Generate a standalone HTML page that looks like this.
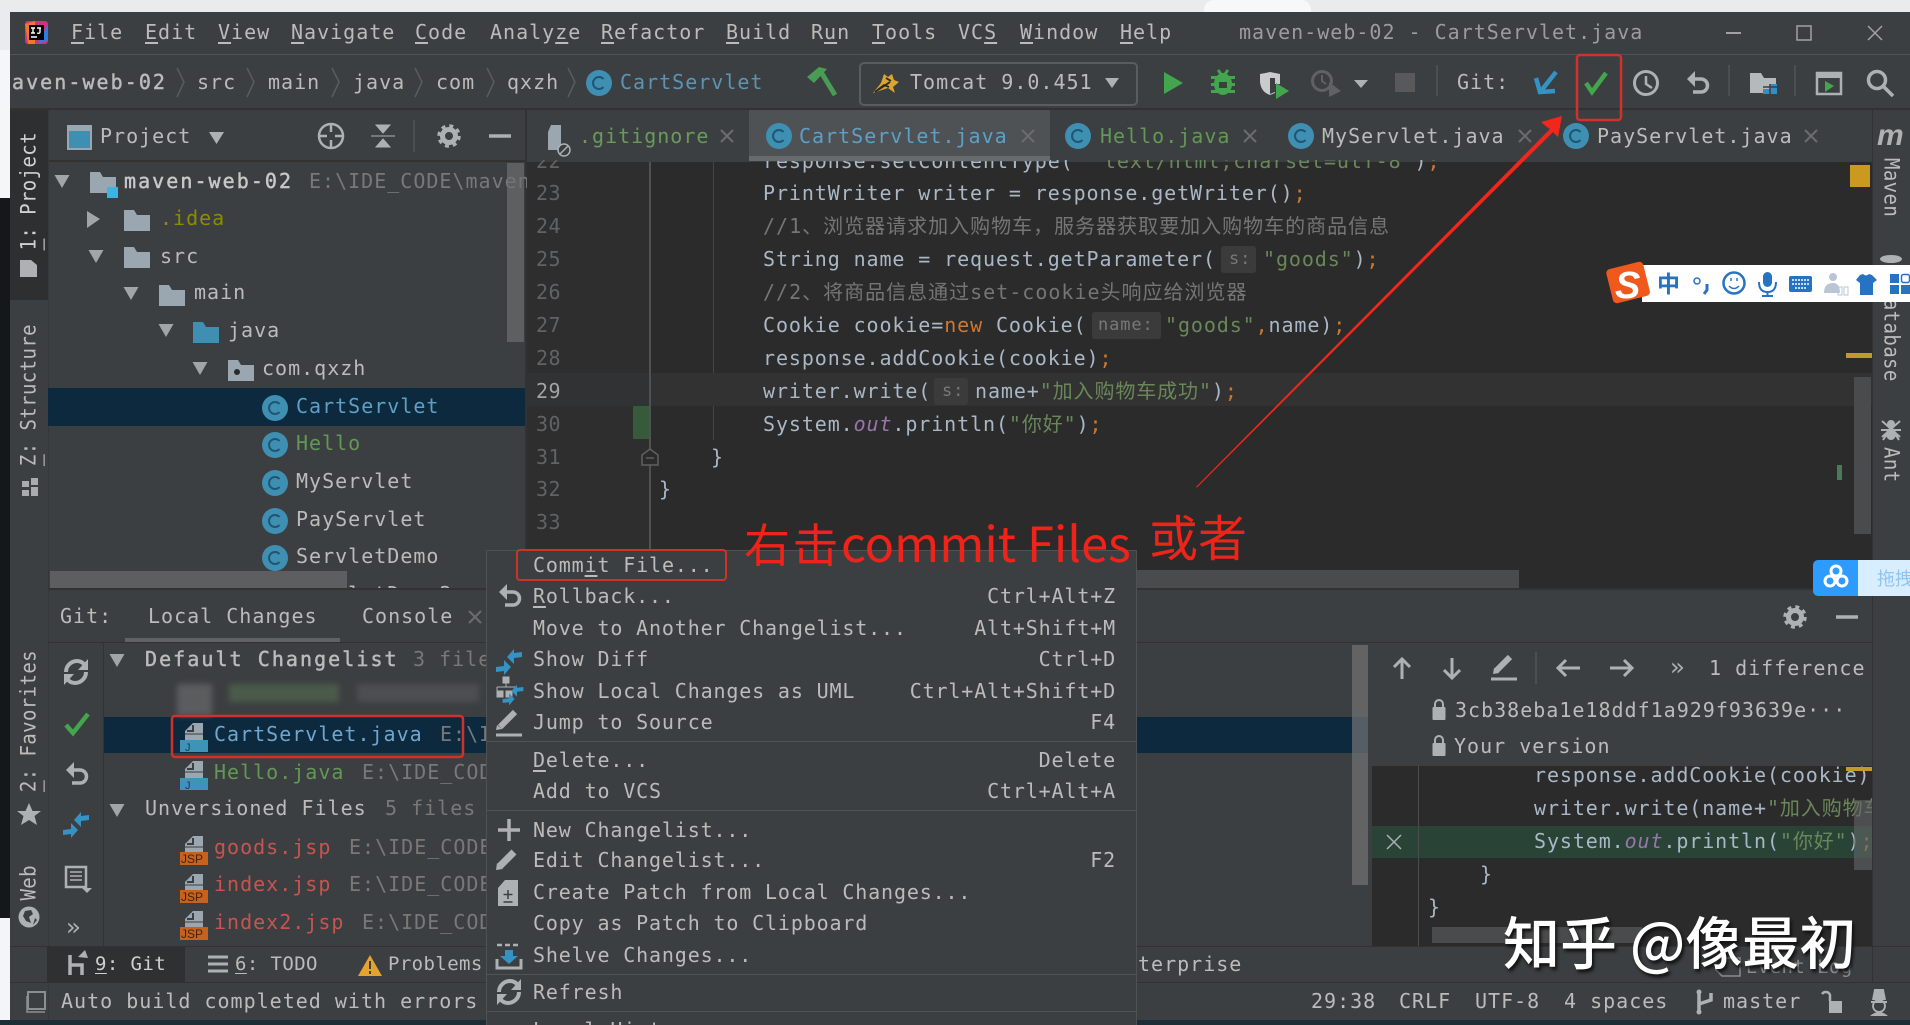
<!DOCTYPE html>
<html><head><meta charset="utf-8"><title>maven-web-02</title>
<style>
html{margin:0;padding:0;width:1910px;height:1025px;overflow:hidden;background:#3c3f41}
body{margin:0;padding:0;width:1910px;height:1025px;overflow:hidden;position:relative;background:#3c3f41}
.b{position:absolute}
.w{position:absolute;left:0;top:1px;width:1910px;height:1024px}
.t{position:absolute;white-space:pre;font:20px/30px "DejaVu Sans Mono","Noto Sans CJK SC",monospace;letter-spacing:1px;color:#bbbbbb}
.st{-webkit-text-stroke:.45px currentColor;letter-spacing:2.05px}
.sm{font-size:19px;letter-spacing:.4px}
.c{position:absolute;white-space:pre;font:20px/30px "DejaVu Sans Mono","Noto Sans CJK SC",monospace;letter-spacing:.9px;color:#a9b7c6}
.n{color:#606366;letter-spacing:.5px}
.g{color:#787878}
.u{text-decoration:underline;text-underline-offset:3px}
.v{position:absolute;white-space:pre;font:19px/24px "DejaVu Sans Mono",monospace;letter-spacing:.4px;color:#bbbbbb;writing-mode:vertical-rl;transform:scaleX(1.12)}
.up{transform:rotate(180deg) scaleX(1.12)}
i{font-style:normal}
.o{color:#cc7832}.s{color:#6a8759}.cm{color:#808080}
.m{position:absolute;left:533px;white-space:pre;font:20px/30px "DejaVu Sans Mono","Noto Sans CJK SC",monospace;letter-spacing:.85px;color:#bbbbbb}
.k{position:absolute;right:794px;white-space:pre;font:20px/30px "DejaVu Sans Mono",monospace;letter-spacing:.85px;color:#bbbbbb}
svg{position:absolute;left:0;top:0}
</style></head><body>
<!-- outside chrome -->
<div class="b" style="left:0;top:0;width:1910px;height:12px;background:#e9ebed"></div>
<div class="b" style="left:1204px;top:0;width:107px;height:12px;background:#f7f8f9;border-radius:10px 10px 0 0"></div>
<div class="b" style="left:0;top:0;width:10px;height:50px;background:#e9ebed"></div>
<div class="b" style="left:0;top:50px;width:10px;height:148px;background:#f5f6f7"></div>
<div class="b" style="left:0;top:198px;width:10px;height:720px;background:#15181b"></div>
<div class="b" style="left:0;top:918px;width:10px;height:102px;background:#f4f5f6"></div>
<div class="b" style="left:0;top:1020px;width:1910px;height:5px;background:#1e2e36"></div>

<!-- window -->
<div class="b" style="left:10px;top:12px;width:1900px;height:1008px;background:#3c3f41"></div>
<div class="b" style="left:10px;top:54px;width:1900px;height:1px;background:#515456"></div>
<div class="b" style="left:10px;top:108px;width:1900px;height:2px;background:#323232"></div>

<!-- menu bar -->
<span class="t" style="left:71px;top:17px"><i class="u">F</i>ile</span>
<span class="t" style="left:145px;top:17px"><i class="u">E</i>dit</span>
<span class="t" style="left:218px;top:17px"><i class="u">V</i>iew</span>
<span class="t" style="left:291px;top:17px"><i class="u">N</i>avigate</span>
<span class="t" style="left:415px;top:17px"><i class="u">C</i>ode</span>
<span class="t" style="left:490px;top:17px">Analy<i class="u">z</i>e</span>
<span class="t" style="left:601px;top:17px"><i class="u">R</i>efactor</span>
<span class="t" style="left:726px;top:17px"><i class="u">B</i>uild</span>
<span class="t" style="left:811px;top:17px">R<i class="u">u</i>n</span>
<span class="t" style="left:872px;top:17px"><i class="u">T</i>ools</span>
<span class="t" style="left:958px;top:17px">VC<i class="u">S</i></span>
<span class="t" style="left:1020px;top:17px"><i class="u">W</i>indow</span>
<span class="t" style="left:1120px;top:17px"><i class="u">H</i>elp</span>
<span class="t" style="left:1239px;top:17px;color:#9a9c9e">maven-web-02 - CartServlet.java</span>

<!-- nav bar -->
<span class="t st" style="left:12px;top:67px">aven-web-02</span>
<span class="t" style="left:197px;top:67px">src</span>
<span class="t" style="left:268px;top:67px">main</span>
<span class="t" style="left:353px;top:67px">java</span>
<span class="t" style="left:436px;top:67px">com</span>
<span class="t" style="left:507px;top:67px">qxzh</span>
<span class="t" style="left:620px;top:67px;color:#5b94b5">CartServlet</span>
<div class="b" style="left:859px;top:62px;width:275px;height:40px;border:2px solid #5a5d5f;border-radius:5px"></div>
<span class="t" style="left:910px;top:67px">Tomcat 9.0.451</span>
<span class="t" style="left:1457px;top:67px">Git:</span>

<!-- left stripe -->
<div class="b" style="left:10px;top:110px;width:38px;height:190px;background:#2d2f31"></div>
<div class="b" style="left:48px;top:110px;width:1px;height:910px;background:#353739"></div>
<span class="v up" style="left:17px;top:132px;color:#d0d0d0"><i class="u">1</i>: Project</span>
<span class="v up" style="left:17px;top:324px"><i class="u">Z</i>: Structure</span>
<span class="v up" style="left:17px;top:650px"><i class="u">2</i>: Favorites</span>
<span class="v up" style="left:17px;top:865px">Web</span>

<!-- project panel -->
<span class="t" style="left:100px;top:121px">Project</span>
<div class="b" style="left:49px;top:160px;width:476px;height:2px;background:#323232"></div>
<div class="b" style="left:525px;top:110px;width:2px;height:480px;background:#323232"></div>
<div class="b" style="left:48px;top:388px;width:477px;height:38px;background:#0d293e"></div>
<span class="t st" style="left:124px;top:166px;color:#c8c8c8">maven-web-02</span>
<span class="t g" style="left:309px;top:166px">E:\IDE_CODE\maven</span>
<span class="t" style="left:160px;top:203px;color:#8c8c00">.idea</span>
<span class="t" style="left:160px;top:241px">src</span>
<span class="t" style="left:194px;top:277px">main</span>
<span class="t" style="left:228px;top:315px">java</span>
<span class="t" style="left:262px;top:353px">com.qxzh</span>
<span class="t" style="left:296px;top:391px;color:#5e9fc6">CartServlet</span>
<span class="t" style="left:296px;top:428px;color:#629755">Hello</span>
<span class="t" style="left:296px;top:466px">MyServlet</span>
<span class="t" style="left:296px;top:504px">PayServlet</span>
<span class="t" style="left:296px;top:541px">ServletDemo</span>
<span class="t" style="left:296px;top:579px">ServletDemo2</span>
<div class="b" style="left:507px;top:163px;width:17px;height:179px;background:rgba(110,112,114,.65)"></div>
<div class="b" style="left:50px;top:571px;width:297px;height:17px;background:#5c5e60"></div>

<!-- editor -->
<div class="b" style="left:527px;top:162px;width:1345px;height:428px;background:#2b2b2b;overflow:hidden"></div>
<div class="b" style="left:527px;top:162px;width:122px;height:428px;background:#2e2e2f"></div>
<div class="b" style="left:649px;top:162px;width:2px;height:428px;background:#515151"></div>
<div class="b" style="left:713px;top:162px;width:1px;height:278px;background:#454545"></div>
<div class="b" style="left:651px;top:373px;width:1221px;height:33px;background:#323232"></div>
<div class="b" style="left:527px;top:373px;width:122px;height:33px;background:#313233"></div>
<div class="b" style="left:633px;top:406px;width:16px;height:33px;background:#375a3a"></div>
<div class="w">
<span class="c" style="left:763px;top:145px">response.setContentType(</span>
<span class="c" style="left:1091px;top:145px"><i class="s">"text/html;charset=utf-8"</i>)<i class="o">;</i></span>
<span class="c n" style="left:536px;top:145px">22</span>
<span class="c n" style="left:536px;top:177px">23</span>
<span class="c n" style="left:536px;top:210px">24</span>
<span class="c n" style="left:536px;top:243px">25</span>
<span class="c n" style="left:536px;top:276px">26</span>
<span class="c n" style="left:536px;top:309px">27</span>
<span class="c n" style="left:536px;top:342px">28</span>
<span class="c n" style="left:536px;top:375px;color:#a4a3a3">29</span>
<span class="c n" style="left:536px;top:408px">30</span>
<span class="c n" style="left:536px;top:441px">31</span>
<span class="c n" style="left:536px;top:473px">32</span>
<span class="c n" style="left:536px;top:506px">33</span>
<span class="c" style="left:763px;top:177px">PrintWriter writer = response.getWriter()<i class="o">;</i></span>
<span class="c cm" style="left:763px;top:210px;letter-spacing:1px;color:#757575">//1、浏览器请求加入购物车，服务器获取要加入购物车的商品信息</span>
<span class="c" style="left:763px;top:243px">String name = request.getParameter(</span>
<div class="b" style="left:1221px;top:245px;width:35px;height:27px;background:#3b3b3b;border-radius:3px"></div>
<span class="c" style="left:1229px;top:243px;font-size:17px;color:#787878">s:</span>
<span class="c" style="left:1263px;top:243px"><i class="s">"goods"</i>)<i class="o">;</i></span>
<span class="c cm" style="left:763px;top:276px;letter-spacing:1px;color:#757575">//2、将商品信息通过set-cookie头响应给浏览器</span>
<span class="c" style="left:763px;top:309px">Cookie cookie=<i class="o">new</i> Cookie(</span>
<div class="b" style="left:1092px;top:311px;width:69px;height:27px;background:#3b3b3b;border-radius:3px"></div>
<span class="c" style="left:1098px;top:309px;font-size:17px;color:#787878">name:</span>
<span class="c" style="left:1165px;top:309px"><i class="s">"goods"</i><i class="o">,</i>name)<i class="o">;</i></span>
<span class="c" style="left:763px;top:342px">response.addCookie(cookie)<i class="o">;</i></span>
<span class="c" style="left:763px;top:375px">writer.write(</span>
<div class="b" style="left:934px;top:377px;width:34px;height:27px;background:#3b3b3b;border-radius:3px"></div>
<span class="c" style="left:942px;top:375px;font-size:17px;color:#787878">s:</span>
<span class="c" style="left:975px;top:375px">name+<i class="s">"加入购物车成功"</i>)<i class="o">;</i></span>
<span class="c" style="left:763px;top:408px">System.<i style="font-style:italic;color:#9876aa">out</i>.println(<i class="s">"你好"</i>)<i class="o">;</i></span>
<span class="c" style="left:711px;top:441px">}</span>
<span class="c" style="left:659px;top:473px">}</span>
</div>
<div class="b" style="left:1854px;top:377px;width:17px;height:157px;background:#4a4b4c"></div>
<div class="b" style="left:1850px;top:165px;width:20px;height:22px;background:#c99a1f"></div>
<div class="b" style="left:1846px;top:353px;width:26px;height:5px;background:#c19a2a"></div>
<div class="b" style="left:1837px;top:465px;width:5px;height:15px;background:#4b7a5a"></div>
<div class="b" style="left:650px;top:570px;width:869px;height:18px;background:#4a4b4c"></div>

<!-- tabs -->
<div class="b" style="left:527px;top:110px;width:1345px;height:50px;background:#3c3f41"></div>
<div class="b" style="left:749px;top:110px;width:301px;height:47px;background:#4e5254"></div>
<div class="b" style="left:749px;top:156px;width:301px;height:5px;background:#686b6e"></div>
<span class="t" style="left:579px;top:121px;color:#6a9a5b">.gitignore</span>
<span class="t" style="left:799px;top:121px;color:#5e9fc6">CartServlet.java</span>
<span class="t" style="left:1100px;top:121px;color:#629755">Hello.java</span>
<span class="t" style="left:1322px;top:121px">MyServlet.java</span>
<span class="t" style="left:1597px;top:121px">PayServlet.java</span>

<!-- right stripe -->
<div class="b" style="left:1872px;top:110px;width:38px;height:872px;background:#3c3f41;border-left:1px solid #323232;box-sizing:border-box"></div>
<span class="v" style="left:1879px;top:158px">Maven</span>
<span class="v" style="left:1879px;top:287px">Database</span>
<span class="v" style="left:1879px;top:447px">Ant</span>
<span class="t" style="left:1877px;top:121px;font:italic bold 30px/30px 'Liberation Sans',sans-serif;color:#b0b0b0;letter-spacing:0">m</span>

<!-- git panel -->
<div class="b" style="left:49px;top:588px;width:1823px;height:358px;background:#3c3f41"></div>
<div class="b" style="left:49px;top:588px;width:1823px;height:2px;background:#323232"></div>
<div class="b" style="left:49px;top:642px;width:1823px;height:1px;background:#323232"></div>
<span class="t" style="left:60px;top:601px">Git:</span>
<span class="t" style="left:148px;top:601px">Local Changes</span>
<span class="t" style="left:362px;top:601px">Console</span>
<div class="b" style="left:125px;top:638px;width:215px;height:4px;background:#606366"></div>
<div class="b" style="left:103px;top:643px;width:1px;height:303px;background:#323232"></div>
<div class="b" style="left:104px;top:717px;width:1264px;height:36px;background:#0d293e"></div>
<span class="t st" style="left:145px;top:644px">Default Changelist</span>
<span class="t g" style="left:413px;top:644px">3 files</span>
<div class="b" style="left:177px;top:684px;width:35px;height:32px;background:#5a5c5e;filter:blur(3px)"></div>
<div class="b" style="left:229px;top:684px;width:110px;height:18px;background:#4b5a4a;filter:blur(3px)"></div>
<div class="b" style="left:357px;top:684px;width:122px;height:18px;background:#4c4e50;filter:blur(3px)"></div>
<span class="t" style="left:214px;top:719px;color:#6fa6cf">CartServlet.java</span>
<span class="t g" style="left:440px;top:719px">E:\IDE_CODE</span>
<span class="t" style="left:214px;top:757px;color:#629755">Hello.java</span>
<span class="t g" style="left:362px;top:757px">E:\IDE_CODE</span>
<span class="t" style="left:145px;top:793px">Unversioned Files</span>
<span class="t g" style="left:385px;top:793px">5 files</span>
<span class="t" style="left:214px;top:832px;color:#c75450">goods.jsp</span>
<span class="t g" style="left:349px;top:832px">E:\IDE_CODE</span>
<span class="t" style="left:214px;top:869px;color:#c75450">index.jsp</span>
<span class="t g" style="left:349px;top:869px">E:\IDE_CODE</span>
<span class="t" style="left:214px;top:907px;color:#c75450">index2.jsp</span>
<span class="t g" style="left:362px;top:907px">E:\IDE_CODE</span>
<div class="b" style="left:1352px;top:645px;width:16px;height:240px;background:rgba(110,112,114,.75)"></div>

<!-- diff -->
<div class="b" style="left:1372px;top:766px;width:500px;height:180px;background:#2b2b2b"></div>
<div class="b" style="left:1372px;top:826px;width:500px;height:32px;background:#294436"></div>
<div class="b" style="left:1418px;top:766px;width:1px;height:180px;background:#4a4c4e"></div>
<span class="t" style="left:1709px;top:653px">1 difference</span>
<span class="t" style="left:1455px;top:695px">3cb38eba1e18ddf1a929f93639e···</span>
<span class="t" style="left:1454px;top:731px">Your version</span>
<div class="b" style="left:1372px;top:766px;width:500px;height:180px;overflow:hidden">
<span class="c" style="left:162px;top:-6px">response.addCookie(cookie)<i class="o">;</i></span>
<span class="c" style="left:162px;top:27px">writer.write(name+<i class="s">"加入购物车成功"</i>)<i class="o">;</i></span>
<span class="c" style="left:162px;top:60px">System.<i style="font-style:italic;color:#9876aa">out</i>.println(<i class="s">"你好"</i>)<i class="o">;</i></span>
<span class="c" style="left:108px;top:93px">}</span>
<span class="c" style="left:56px;top:126px">}</span>
</div>
<div class="b" style="left:1854px;top:800px;width:18px;height:70px;background:rgba(100,102,104,.6)"></div>
<div class="b" style="left:1846px;top:767px;width:26px;height:4px;background:#c19a2a"></div>
<div class="b" style="left:1432px;top:927px;width:210px;height:16px;background:#4a4b4c"></div>

<!-- bottom bars -->
<div class="b" style="left:10px;top:946px;width:1900px;height:1px;background:#323232"></div>
<div class="b" style="left:10px;top:982px;width:1900px;height:1px;background:#323232"></div>
<div class="b" style="left:47px;top:947px;width:138px;height:35px;background:#2e3032"></div>
<span class="t sm" style="left:95px;top:949px;color:#d0d0d0"><i class="u">9</i>: Git</span>
<span class="t sm" style="left:235px;top:949px"><i class="u">6</i>: TODO</span>
<span class="t sm" style="left:388px;top:949px">Problems</span>
<span class="t" style="left:1138px;top:949px">terprise</span>
<span class="t sm" style="left:1746px;top:952px;color:#8a8c8e">Event Log</span>
<span class="t" style="left:61px;top:986px">Auto build completed with errors</span>
<span class="t" style="left:1311px;top:986px">29:38</span>
<span class="t" style="left:1399px;top:986px">CRLF</span>
<span class="t" style="left:1475px;top:986px">UTF-8</span>
<span class="t" style="left:1564px;top:986px">4 spaces</span>
<span class="t" style="left:1723px;top:986px">master</span>

<!-- base icons -->
<svg width="1910" height="1025" viewBox="0 0 1910 1025">
<defs>
<g id="ci"><circle r="13" fill="#3f8fb3"/><path d="M4.500-4A6 6 0 1 0 4.500 4" stroke="#1d5672" stroke-width="2" fill="none"/></g>
<path id="fo" d="M0 0H10L13 5H26V21H0Z"/>
<g id="jf"><path d="M13 0H23V17H5V8Z" fill="#9aa7b0"/><path d="M13 2V8H7" fill="none" stroke="#3c3f41" stroke-width="2"/><path d="M5 11H23" stroke="#3c3f41" stroke-width="1"/></g>
<path id="xx" d="M-6-6L6 6M6-6L-6 6" stroke="#6a6c6e" stroke-width="2" fill="none"/>
<path id="dn" d="M-7.500-6H7.500L0 7Z" fill="#a0a5a8"/>
<g id="gear" fill="none" stroke="#aeb1b3"><circle r="6.500" stroke-width="5"/><circle r="10" stroke-width="3.500" stroke-dasharray="3.900 3.950"/></g>
<g id="und"><path d="M-7-5H3A6.500 6.500 0 0 1 3 8H-5" fill="none" stroke="#aeb1b3" stroke-width="3.500"/><path d="M-11-5L-3-13V3Z" fill="#aeb1b3"/></g>
<g id="dh"><path d="M-2-5L5-13V-9L13-10V-5L5-4V2Z" fill="#3592c4"/></g>
<g id="dif"><use href="#dh"/><use href="#dh" transform="rotate(180)"/></g>
<g id="pen"><path d="M-9 6L5-8" stroke="#aeb1b3" stroke-width="6"/><path d="M-12 9L-11 3-6 8Z" fill="#aeb1b3"/></g>
<g id="rh"><path d="M-10 0C-10-7-4-11 1-11 5-11 7-9 9-7" fill="none" stroke="#aeb1b3" stroke-width="4"/><path d="M12-13V-2H2Z" fill="#aeb1b3"/></g>
<g id="ref"><use href="#rh"/><use href="#rh" transform="rotate(180)"/></g>
<g id="lk"><path d="M-4-4V-7A4 4 0 0 1 4-7V-4" fill="none" stroke="#aeb1b3" stroke-width="2"/><rect x="-6.500" y="-4" width="13" height="13" rx="1" fill="#aeb1b3"/></g>
</defs>
<!-- logo -->
<rect x="25" y="21" width="23" height="23" rx="3" fill="#c9357e"/><path d="M25 24L35 21V44H28Z" fill="#f0772b"/><path d="M48 24V40L38 44Z" fill="#2f7de1"/><rect x="29" y="25" width="15" height="15" fill="#000"/><path d="M31 28H35M33 28V33M31 33H35M37 28H41M40 28V32Q40 34 37 33M31 37H37" stroke="#fff" stroke-width="1.400" fill="none"/>
<!-- window controls -->
<path d="M1726 33H1741" stroke="#a0a2a4" stroke-width="2"/><rect x="1797" y="26" width="14" height="14" fill="none" stroke="#a0a2a4" stroke-width="1.500"/><path d="M1868 26L1882 40M1882 26L1868 40" stroke="#a0a2a4" stroke-width="1.500"/>
<!-- breadcrumb chevrons -->
<g fill="none" stroke="#5a5c5e" stroke-width="1.500"><path d="M177 68L184 82 177 97"/><path d="M247 68L254 82 247 97"/><path d="M332 68L339 82 332 97"/><path d="M415 68L422 82 415 97"/><path d="M487 68L494 82 487 97"/><path d="M568 68L575 82 568 97"/></g>
<use href="#ci" x="599" y="83"/>
<!-- hammer -->
<path d="M821 72L835 95" stroke="#499c54" stroke-width="5"/><path d="M807 77L819 67 827 69 814 83Z" fill="#499c54"/>
<!-- tomcat -->
<path d="M873 93L881 83 884 74 888 77 892 74 894 80 899 82 893 87 895 93 888 88Z" fill="#d9a62f"/><path d="M875 92L884 85 889 87M886 78L891 81M878 90L890 82" stroke="#2a2a2a" stroke-width="1.800" fill="none"/>
<path d="M1105 78H1119L1112 88Z" fill="#aeb1b3"/>
<!-- run -->
<path d="M1164 72L1183 83 1164 94Z" fill="#43a64e"/>
<g fill="#43a64e"><ellipse cx="1223" cy="84" rx="9" ry="11"/><path d="M1211 76H1235V79H1211ZM1211 83H1235V86H1211ZM1211 90H1235V93H1211ZM1217 71L1219 69 1222 73H1224L1227 69 1229 71 1226 75H1220Z"/></g><path d="M1219 82H1227V88H1219Z" fill="#3c3f41"/>
<path d="M1260 74Q1266 73 1270 72 1275 73 1280 74V84H1275V93L1270 95Q1261 92 1260 82Z" fill="#c9cbcd"/><path d="M1270 78H1275V92L1270 94Z" fill="#3c3f41"/><path d="M1276 83L1289 91 1276 99Z" fill="#43a64e"/>
<circle cx="1322" cy="81" r="9.500" fill="none" stroke="#5f6163" stroke-width="3"/><path d="M1322 75V81L1326 84" stroke="#5f6163" stroke-width="2" fill="none"/><path d="M1329 82L1341 91 1329 97Z" fill="#5f6163"/>
<path d="M1354 80H1368L1361 88Z" fill="#aeb1b3"/>
<rect x="1395" y="73" width="20" height="19" fill="#59595b"/>
<path d="M1437 65V96" stroke="#515456" stroke-width="1.500"/>
<!-- git actions -->
<path d="M1556 72L1541 91" stroke="#3592c4" stroke-width="4.500" fill="none"/><path d="M1536 78L1540 92 1555 91" stroke="#3592c4" stroke-width="4.500" fill="none"/>
<path d="M1586 83L1592 92 1606 73" stroke="#43a64e" stroke-width="4.500" fill="none"/>
<circle cx="1646" cy="83" r="11.500" fill="none" stroke="#aeb1b3" stroke-width="3"/><path d="M1646 76V84L1652 88" stroke="#aeb1b3" stroke-width="2.500" fill="none"/>
<use href="#und" x="1698" y="84"/>
<path d="M1729 65V96" stroke="#515456" stroke-width="1.500"/>
<path d="M1750 73H1761L1764 78H1776V93H1750Z" fill="#b6b9bb"/><path d="M1763 94V89H1770V84H1777V94Z" fill="#2f8fcc"/><path d="M1763 87H1777M1770 84V94" stroke="#3c3f41" stroke-width="1.500"/>
<path d="M1795 65V96" stroke="#515456" stroke-width="1.500"/>
<rect x="1817" y="73" width="24" height="21" fill="none" stroke="#aeb1b3" stroke-width="2.500"/><rect x="1817" y="73" width="24" height="5" fill="#aeb1b3"/><path d="M1825 81L1834 86 1825 92Z" fill="#43a64e"/>
<circle cx="1877" cy="80" r="8.500" fill="none" stroke="#aeb1b3" stroke-width="3.500"/><path d="M1883 86L1893 96" stroke="#aeb1b3" stroke-width="3.500"/>
<!-- left stripe icons -->
<path d="M20 260H31L37 265V277H20Z" fill="#aeb1b3"/>
<path d="M22 490H29V496H22ZM31 478H38V485H31ZM31 487H38V496H31ZM22 481H29V487H22Z" fill="#a9abad"/>
<path d="M29 803L32.500 811H41L34.500 816 37 825 29 820 21 825 23.500 816 17 811H25.500Z" fill="#aeb1b3"/>
<circle cx="29" cy="917" r="10.500" fill="#aeb1b3"/><path d="M25 911L31 910 33 914 29 917 31 923 26 921 23 916ZM35 918L37 920 33 925Z" fill="#3c3f41"/>
<!-- project header -->
<rect x="67" y="125" width="25" height="25" fill="#9aa7b0"/><rect x="69" y="131" width="21" height="17" fill="#3f8fb3"/>
<path d="M209 132H224L216.500 144Z" fill="#aeb1b3"/>
<circle cx="331" cy="136" r="12" fill="none" stroke="#aeb1b3" stroke-width="2.500"/><path d="M331 125V132M331 140V147M320 136H327M335 136H342" stroke="#aeb1b3" stroke-width="2.500"/>
<path d="M376 125H390L383 133ZM376 147H390L383 139ZM371 136H395" fill="#aeb1b3" stroke="#aeb1b3" stroke-width="1"/>
<path d="M414 120V152" stroke="#515456" stroke-width="1.500"/>
<use href="#gear" x="449" y="136"/>
<path d="M489 136H511" stroke="#aeb1b3" stroke-width="3.500"/>
<!-- tree -->
<use href="#dn" x="62" y="181"/><path d="M87 211L100 219 87 228Z" fill="#a0a5a8"/><use href="#dn" x="96" y="256"/><use href="#dn" x="131" y="293"/><use href="#dn" x="166" y="330"/><use href="#dn" x="200" y="368"/>
<use href="#fo" x="90" y="172" fill="#9aa7b0"/><rect x="107" y="187" width="11" height="11" fill="#3cb5e5"/>
<use href="#fo" x="124" y="210" fill="#9aa7b0"/><use href="#fo" x="124" y="247" fill="#9aa7b0"/><use href="#fo" x="159" y="285" fill="#9aa7b0"/><use href="#fo" x="193" y="322" fill="#3f8fb3"/><use href="#fo" x="228" y="360" fill="#9aa7b0"/><circle cx="237" cy="372" r="3" fill="#2b2b2b"/>
<use href="#ci" x="275" y="408"/><use href="#ci" x="275" y="445"/><use href="#ci" x="275" y="483"/><use href="#ci" x="275" y="521"/><use href="#ci" x="275" y="558"/>
<!-- tab icons -->
<path d="M551 125H561V150H548V132Z" fill="#9aa7b0"/><circle cx="564" cy="150" r="6" fill="#3c3f41" stroke="#aeb1b3" stroke-width="1.500"/><path d="M560 154L568 146" stroke="#aeb1b3" stroke-width="1.500"/>
<use href="#xx" x="727" y="136"/><use href="#ci" x="779" y="136"/><use href="#xx" x="1028" y="136"/><use href="#ci" x="1078" y="136"/><use href="#xx" x="1250" y="136"/><use href="#ci" x="1301" y="136"/><use href="#xx" x="1525" y="136"/><use href="#ci" x="1576" y="136"/><use href="#xx" x="1811" y="136"/>
<!-- fold -->
<path d="M650 449L658 455V465H642V455Z" fill="#2b2b2b" stroke="#606060" stroke-width="1.500"/><path d="M646 458H654" stroke="#606060" stroke-width="1.500"/>
<!-- right stripe icons -->
<ellipse cx="1891" cy="259" rx="11" ry="4" fill="#aeb1b3"/>
<g fill="#aeb1b3"><circle cx="1891" cy="424" r="4"/><ellipse cx="1891" cy="434" rx="5" ry="6"/><path d="M1882 421L1900 437M1900 421L1882 437M1881 430H1901M1883 440L1887 434M1899 440L1895 434" stroke="#aeb1b3" stroke-width="2"/></g>
<!-- git panel icons -->
<use href="#xx" x="475" y="617"/>
<use href="#ref" x="76" y="672"/>
<path d="M66 725L73 733 88 714" stroke="#43a64e" stroke-width="4.500" fill="none"/>
<use href="#und" x="77" y="775"/>
<use href="#dif" x="76" y="825"/>
<rect x="66" y="867" width="20" height="20" fill="none" stroke="#aeb1b3" stroke-width="2.500"/><path d="M70 872H82M70 876H82M70 880H82" stroke="#aeb1b3" stroke-width="1.500"/><path d="M82 888H92L87 893Z" fill="#aeb1b3"/>
<text x="66" y="935" font-family="DejaVu Sans Mono,monospace" font-size="24" fill="#aeb1b3">»</text>
<use href="#dn" x="117" y="660"/><use href="#dn" x="117" y="810"/>
<use href="#jf" x="180" y="723"/><rect x="180" y="740" width="28" height="12" fill="#3f93b8"/><text x="185" y="751" font-family="Liberation Sans,sans-serif" font-size="11" fill="#153c50">J</text>
<use href="#jf" x="180" y="761"/><rect x="180" y="778" width="28" height="12" fill="#3f93b8"/><text x="185" y="789" font-family="Liberation Sans,sans-serif" font-size="11" fill="#153c50">J</text>
<use href="#jf" x="180" y="836"/><rect x="180" y="852" width="28" height="13" fill="#c6621f"/><text x="181" y="863" font-family="Liberation Sans,sans-serif" font-size="12" fill="#43230c">JSP</text>
<use href="#jf" x="180" y="874"/><rect x="180" y="890" width="28" height="13" fill="#c6621f"/><text x="181" y="901" font-family="Liberation Sans,sans-serif" font-size="12" fill="#43230c">JSP</text>
<use href="#jf" x="180" y="911"/><rect x="180" y="927" width="28" height="13" fill="#c6621f"/><text x="181" y="938" font-family="Liberation Sans,sans-serif" font-size="12" fill="#43230c">JSP</text>
<use href="#gear" x="1795" y="617"/><path d="M1836 617H1858" stroke="#aeb1b3" stroke-width="3.500"/>
<!-- diff toolbar -->
<g fill="none" stroke="#aeb1b3" stroke-width="3"><path d="M1402 679V660M1394 667L1402 659 1410 667"/><path d="M1452 658V677M1444 670L1452 678 1460 670"/><path d="M1558 668H1580M1566 660L1558 668 1566 676"/><path d="M1610 668H1632M1624 660L1632 668 1624 676"/></g>
<use href="#pen" x="1505" y="665"/><path d="M1491 679H1517" stroke="#aeb1b3" stroke-width="3"/>
<path d="M1536 652V684" stroke="#515456" stroke-width="1.500"/>
<text x="1670" y="675" font-family="DejaVu Sans Mono,monospace" font-size="24" fill="#aeb1b3">»</text>
<use href="#lk" x="1439" y="711"/><use href="#lk" x="1439" y="747"/>
<path d="M1387 835L1401 849M1401 835L1387 849" stroke="#aeb1b3" stroke-width="1.500"/>
<!-- bottom bar icons -->
<path d="M70 955V975M70 965H82V975" stroke="#aeb1b3" stroke-width="3.500" fill="none"/><path d="M78 957L85 950 88 958Z" fill="#aeb1b3"/>
<path d="M208 957H228M208 964H228M208 971H228" stroke="#aeb1b3" stroke-width="3"/>
<path d="M370 955L382 976H358Z" fill="#e3a32e"/><path d="M370 961V969M370 971V974" stroke="#3c3f41" stroke-width="2"/>
<path d="M1716 958H1740V976H1722L1716 970Z" fill="none" stroke="#8a8c8e" stroke-width="1.500"/>
<path d="M27 996V1012H45" fill="none" stroke="#8c8f91" stroke-width="1.500"/><rect x="28" y="992" width="17" height="17" fill="none" stroke="#8c8f91" stroke-width="2"/>
<path d="M1699 992V1012M1699 1004L1711 1000V993" fill="none" stroke="#aeb1b3" stroke-width="3.500"/><circle cx="1699" cy="992" r="2.500" fill="#aeb1b3"/><circle cx="1699" cy="1012" r="2.500" fill="#aeb1b3"/>
<rect x="1829" y="1001" width="13" height="12" fill="#aeb1b3"/><path d="M1830 1001V995A4.500 4.500 0 0 0 1822 994" fill="none" stroke="#aeb1b3" stroke-width="2.500"/>
<path d="M1871 1002H1887M1873 1000L1875 990H1883L1885 1000" fill="#aeb1b3" stroke="#aeb1b3" stroke-width="2"/><circle cx="1879" cy="1006" r="6" fill="none" stroke="#aeb1b3" stroke-width="1.800"/><path d="M1870 1016Q1879 1008 1888 1016Z" fill="#aeb1b3"/>
</svg>

<!-- context menu -->
<div class="b" style="left:486px;top:550px;width:651px;height:475px;background:#3c3f41;border:1px solid #4f5254;border-bottom:0;box-sizing:border-box"></div>
<div class="w">
<span class="m" style="top:549px">Comm<i class="u">i</i>t File...</span>
<span class="m" style="top:580px"><i class="u">R</i>ollback...</span>
<span class="m" style="top:612px">Move to Another Changelist...</span>
<span class="m" style="top:643px">Show Diff</span>
<span class="m" style="top:675px">Show Local Changes as UML</span>
<span class="m" style="top:706px">Jump to Source</span>
<span class="m" style="top:744px"><i class="u">D</i>elete...</span>
<span class="m" style="top:775px">Add to VCS</span>
<span class="m" style="top:814px">New Changelist...</span>
<span class="m" style="top:844px">Edit Changelist...</span>
<span class="m" style="top:876px">Create Patch from Local Changes...</span>
<span class="m" style="top:907px">Copy as Patch to Clipboard</span>
<span class="m" style="top:939px">Shelve Changes...</span>
<span class="m" style="top:976px">Refresh</span>
<span class="m" style="top:1014px">Local History</span>
<span class="k" style="top:580px">Ctrl+Alt+Z</span>
<span class="k" style="top:612px">Alt+Shift+M</span>
<span class="k" style="top:643px">Ctrl+D</span>
<span class="k" style="top:675px">Ctrl+Alt+Shift+D</span>
<span class="k" style="top:706px">F4</span>
<span class="k" style="top:744px">Delete</span>
<span class="k" style="top:775px">Ctrl+Alt+A</span>
<span class="k" style="top:844px">F2</span>
</div>
<div class="b" style="left:487px;top:741px;width:649px;height:1px;background:#515456"></div>
<div class="b" style="left:487px;top:810px;width:649px;height:1px;background:#515456"></div>
<div class="b" style="left:487px;top:974px;width:649px;height:1px;background:#515456"></div>
<div class="b" style="left:487px;top:1011px;width:649px;height:1px;background:#515456"></div>

<!-- top layer icons & annotations -->
<svg width="1910" height="1025" viewBox="0 0 1910 1025">
<use href="#und" x="510" y="597"/>
<use href="#dif" x="509" y="662"/>
<path d="M503 677H509V683H503ZM506 683V687M497 687H515M497 687V691M497 691H503V697H497ZM506 691H512V697H506Z" fill="#aeb1b3" stroke="#aeb1b3" stroke-width="1"/><g transform="translate(513 695) scale(.8)"><use href="#dif"/></g>
<path d="M500 727L515 712" stroke="#aeb1b3" stroke-width="6"/><path d="M496 730L497 725 502 729Z" fill="#aeb1b3"/><path d="M496 735H522" stroke="#aeb1b3" stroke-width="3"/>
<path d="M498 830H520M509 819V841" stroke="#aeb1b3" stroke-width="3.500"/>
<path d="M500 866L514 852" stroke="#aeb1b3" stroke-width="7"/><path d="M496 870L497 863 503 869Z" fill="#aeb1b3"/>
<path d="M505 880H518V906H498V888Z" fill="#aeb1b3"/><path d="M508 890V899M503.500 894.500H512.500M503.500 902H512.500" stroke="#3c3f41" stroke-width="1.500"/>
<path d="M497 945H502M505 945H510M513 945H518" stroke="#aeb1b3" stroke-width="2.500"/><path d="M505 950H513V956H518L509 964 500 956H505Z" fill="#3592c4"/><path d="M497 959V968H521V959" fill="none" stroke="#aeb1b3" stroke-width="3"/>
<use href="#ref" x="509" y="992"/>
<rect x="517" y="550" width="209" height="30" rx="3" fill="none" stroke="#d3302a" stroke-width="2"/>
<rect x="172" y="716" width="291" height="41" rx="3" fill="none" stroke="#d3302a" stroke-width="2.500"/>
<rect x="1577" y="55" width="44" height="65" rx="3" fill="none" stroke="#d3302a" stroke-width="2.500"/>
<path d="M1196 487L1196.800 487.800 1553 132 1558 137 1562 116 1541 122 1547 127 1550 129Z" fill="#f2261b"/>
<!-- sogou -->
<rect x="1642" y="265" width="268" height="37" fill="#fff"/>
<rect x="1609" y="265" width="38" height="35" rx="4" fill="#f0591c" transform="rotate(-14 1628 282)"/>
<text x="1615" y="298" font-family="Liberation Sans,sans-serif" font-weight="700" font-style="italic" font-size="38" fill="#fff">S</text>
<text x="1657" y="292" font-family="Noto Sans CJK SC,sans-serif" font-weight="700" font-size="23" fill="#2673c4">中</text>
<circle cx="1697" cy="281" r="3" fill="none" stroke="#2673c4" stroke-width="1.500"/><path d="M1707 284V290L1704 294" stroke="#2673c4" stroke-width="3" fill="none"/>
<circle cx="1734" cy="283" r="10.500" fill="none" stroke="#2673c4" stroke-width="2.500"/><path d="M1729 286Q1734 291 1739 286M1731 278V281M1737 278V281" stroke="#2673c4" stroke-width="1.500" fill="none"/>
<rect x="1763" y="272" width="9" height="15" rx="4.500" fill="#2673c4"/><path d="M1759 282Q1759 292 1767.500 292 1776 292 1776 282M1767.500 292V296M1762 296H1773" fill="none" stroke="#2673c4" stroke-width="2"/>
<rect x="1789" y="276" width="23" height="16" rx="2" fill="#2673c4"/><path d="M1792 280H1809M1792 284H1809M1795 288H1806" stroke="#fff" stroke-width="1.500" stroke-dasharray="2 1"/>
<circle cx="1833" cy="277" r="4" fill="#bcc5d6"/><path d="M1824 293Q1824 283 1833 283 1840 283 1840 293Z" fill="#bcc5d6"/><rect x="1838" y="287" width="4" height="8" fill="none" stroke="#bcc5d6"/><rect x="1844" y="287" width="4" height="8" fill="none" stroke="#bcc5d6"/>
<path d="M1860 275L1863 274Q1866 277 1869 274L1872 275 1877 280 1873 283V295H1860V283L1856 280Z" fill="#2673c4"/>
<path d="M1890 274H1899V283H1890ZM1890 285H1899V294H1890ZM1901 285H1910V294H1901Z" fill="#2673c4"/><rect x="1901.500" y="274.500" width="8" height="8" rx="2" fill="none" stroke="#2673c4" stroke-width="1.500"/>
<!-- baidu -->
<rect x="1813" y="560" width="100" height="36" rx="5" fill="#2d9bff"/><rect x="1858" y="560" width="52" height="36" fill="#d8eeff"/>
<g fill="none" stroke="#fff" stroke-width="3"><circle cx="1836" cy="571" r="5"/><circle cx="1830" cy="581" r="5"/><circle cx="1842" cy="581" r="5"/></g>
<text x="1877" y="585" font-family="Noto Sans CJK SC,sans-serif" font-size="18" fill="#8fc4ef">拖拽</text>
</svg>

<span style="position:absolute;left:744px;top:507px;white-space:pre;font:46px/70px 'Noto Sans CJK SC',sans-serif;color:#f0231a;letter-spacing:0"><i style="letter-spacing:2.500px">右击</i><i style="font-size:48.700px">commit Files</i></span>
<span style="position:absolute;left:1149px;top:501px;white-space:pre;font:49px/70px 'Noto Sans CJK SC',sans-serif;color:#f0231a">或者</span>
<span style="position:absolute;left:1503px;top:897px;white-space:pre;font:500 57px/86px 'Noto Sans CJK SC',sans-serif;color:#fff;text-shadow:2px 3px 3px #111">知乎 @像最初</span>
</body></html>
